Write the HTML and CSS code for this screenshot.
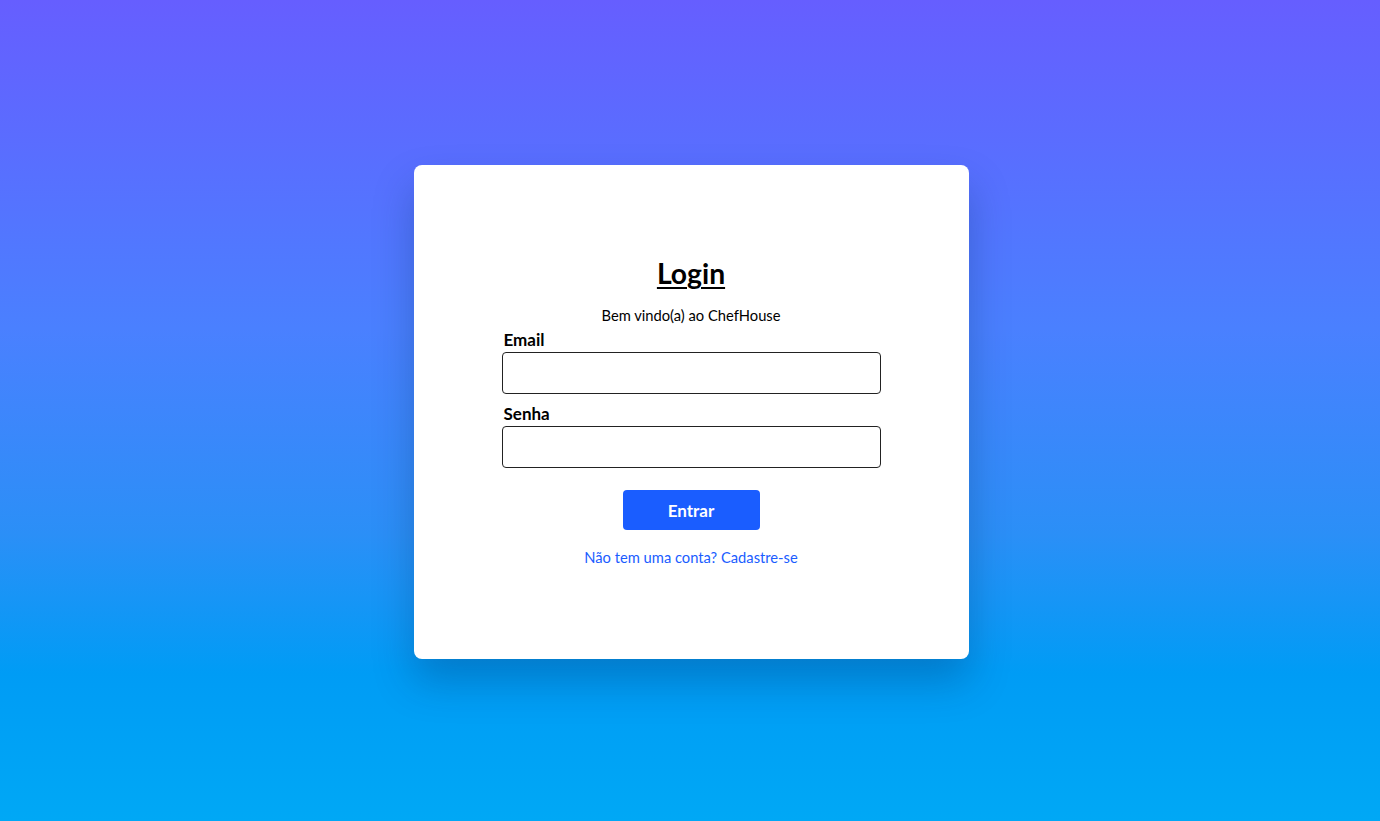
FILE: index.html
```html
<!DOCTYPE html>
<html lang="pt-BR">
<head>
<meta charset="utf-8">
<title>Login - ChefHouse</title>
<link rel="stylesheet" href="styles.css">
</head>
<body>
  <main class="page">
    <section class="card">
      <h1 class="title">Login</h1>
      <p class="subtitle">Bem vindo(a) ao ChefHouse</p>
      <form class="form">
        <label class="label" for="email">Email</label>
        <input class="input" id="email" type="email">
        <label class="label label-second" for="senha">Senha</label>
        <input class="input" id="senha" type="password">
        <button class="button" type="button">Entrar</button>
      </form>
      <a class="link" href="#">Não tem uma conta? Cadastre-se</a>
    </section>
  </main>
</body>
</html>
```
FILE: styles.css
```css
* { box-sizing: border-box; }
html, body { margin: 0; height: 100%; }
body {
  font-family: Lato, "Noto Sans", sans-serif;
  background: linear-gradient(180deg, #665eff 0%, #4a80ff 40%, #2b8ff7 65%, #009cf5 82%, #00a8f5 100%);
  color: #000;
}
.page {
  min-height: 100vh;
  display: flex;
  align-items: center;
  justify-content: center;
  padding: 2px 0 0 2px;
}
.card {
  width: 555px;
  height: 494px;
  padding-bottom: 2px;
  background: #fff;
  border-radius: 8px;
  box-shadow: 0 22px 40px rgba(0, 40, 90, 0.28);
  display: flex;
  flex-direction: column;
  align-items: center;
  justify-content: center;
}
.title {
  margin: 0;
  font-size: 28.3px;
  line-height: 36px;
  font-weight: 700;
  text-decoration: underline;
  text-decoration-thickness: 2px;
  text-underline-offset: 3px;
}
.subtitle {
  margin: 15px 0 0;
  font-size: 14.72px;
  line-height: 18px;
}
.form {
  width: 379px;
  display: flex;
  flex-direction: column;
  margin-top: 6px;
}
.label {
  font-size: 17px;
  line-height: 20px;
  font-weight: 700;
  padding-left: 2px;
  margin-bottom: 2px;
}
.label-second { margin-top: 10px; }
.input {
  height: 42px;
  border: 1px solid #222;
  border-radius: 4px;
  background: #fff;
  font-family: inherit;
  font-size: 16px;
  padding: 0 10px;
}
.button {
  align-self: center;
  margin-top: 22px;
  width: 137px;
  height: 40px;
  border: none;
  border-radius: 4px;
  background: #1a5dff;
  color: #fff;
  font-family: inherit;
  font-size: 17px;
  font-weight: 700;
  cursor: pointer;
}
.link {
  margin-top: 18px;
  font-size: 14.72px;
  line-height: 18px;
  color: #1a5dff;
  text-decoration: none;
}
```
